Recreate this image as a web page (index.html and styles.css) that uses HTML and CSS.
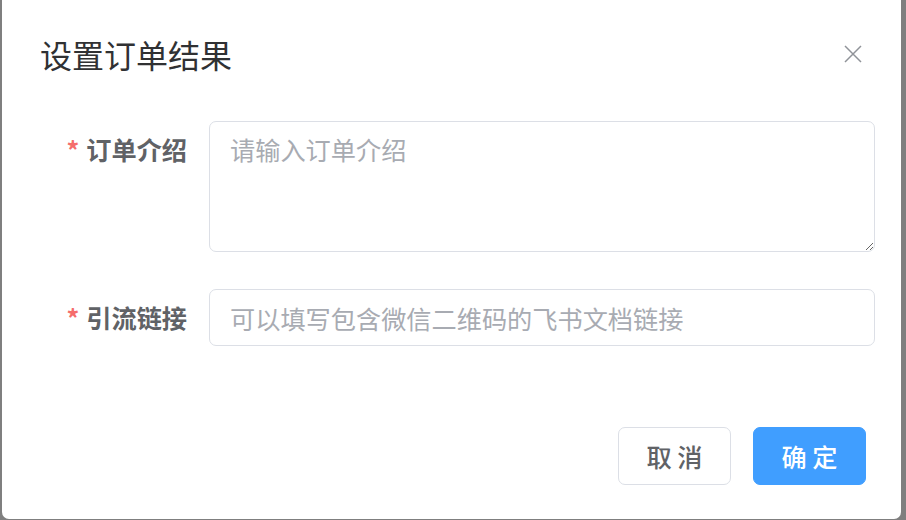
FILE: index.html
```html
<!DOCTYPE html>
<html lang="zh-CN">
<head>
	<meta charset="UTF-8">
	<title>设置订单结果</title>
	<link rel="stylesheet" href="styles.css">
</head>
<body>
	<div class="dialog">
		<div class="dialog-header">
			<span class="dialog-title">设置订单结果</span>
			<button class="dialog-close" type="button" aria-label="关闭">
				<svg width="18" height="18" viewBox="0 0 18 18">
					<path d="M1 1 L17 17 M17 1 L1 17" stroke="#909399" stroke-width="1.5" fill="none"/>
				</svg>
			</button>
		</div>
		<div class="dialog-body">
			<form class="form">
				<div class="form-item">
					<label class="form-label is-required">订单介绍</label>
					<div class="form-control">
						<textarea class="textarea" placeholder="请输入订单介绍"></textarea>
					</div>
				</div>
				<div class="form-item">
					<label class="form-label is-required">引流链接</label>
					<div class="form-control">
						<input class="input" type="text" placeholder="可以填写包含微信二维码的飞书文档链接">
					</div>
				</div>
			</form>
		</div>
		<div class="dialog-footer">
			<button class="btn" type="button">取 消</button>
			<button class="btn btn-primary" type="button">确 定</button>
		</div>
	</div>
</body>
</html>
```

FILE: styles.css
```css
* {
	box-sizing: border-box;
}
body {
	margin: 0;
	background: #7f7f7f;
	font-family: "Noto Sans CJK SC", "Noto Sans", sans-serif;
	height: 520px;
	overflow: hidden;
}
.dialog {
	margin-left: 2px;
	width: 899px;
	height: 519px;
	background: #fff;
	border-radius: 0 0 7px 7px;
}
.dialog-header {
	display: flex;
	align-items: center;
	justify-content: space-between;
	padding: 38px 39px 0 38px;
}
.dialog-title {
	font-size: 32px;
	line-height: 32px;
	color: #303133;
}
.dialog-close {
	border: 0;
	background: none;
	padding: 0;
	width: 18px;
	height: 18px;
	display: flex;
	cursor: pointer;
}
.dialog-body {
	padding: 51px 26px 0 38px;
}
.form-item {
	display: flex;
	margin-bottom: 37px;
}
.form-item:last-child {
	margin-bottom: 0;
}
.form-label {
	width: 169px;
	padding-right: 22px;
	text-align: right;
	font-size: 25.2px;
	line-height: 57px;
	font-weight: 700;
	color: #606266;
}
.form-label.is-required::before {
	content: "*";
	color: #f56c6c;
	margin-right: 7px;
}
.form-control {
	flex: 1;
}
.textarea,
.input {
	display: block;
	width: 100%;
	border: 1px solid #dcdfe6;
	border-radius: 7px;
	font-family: inherit;
	font-size: 25.2px;
	color: #606266;
	outline: none;
}
.textarea {
	height: 131px;
	padding: 9px 20px;
	line-height: 1.5;
	resize: vertical;
}
.input {
	height: 57px;
	padding: 0 20px;
}
.textarea::placeholder,
.input::placeholder {
	color: #a8abb2;
}
.dialog-footer {
	display: flex;
	justify-content: flex-end;
	gap: 22px;
	padding: 81px 35px 0 0;
}
.btn {
	width: 113px;
	height: 58px;
	padding: 0;
	border: 1px solid #dcdfe6;
	border-radius: 7px;
	background: #fff;
	font-family: inherit;
	font-size: 25.2px;
	font-weight: 500;
	color: #606266;
	cursor: pointer;
}
.btn-primary {
	background: #409eff;
	border-color: #409eff;
	color: #fff;
}
```
